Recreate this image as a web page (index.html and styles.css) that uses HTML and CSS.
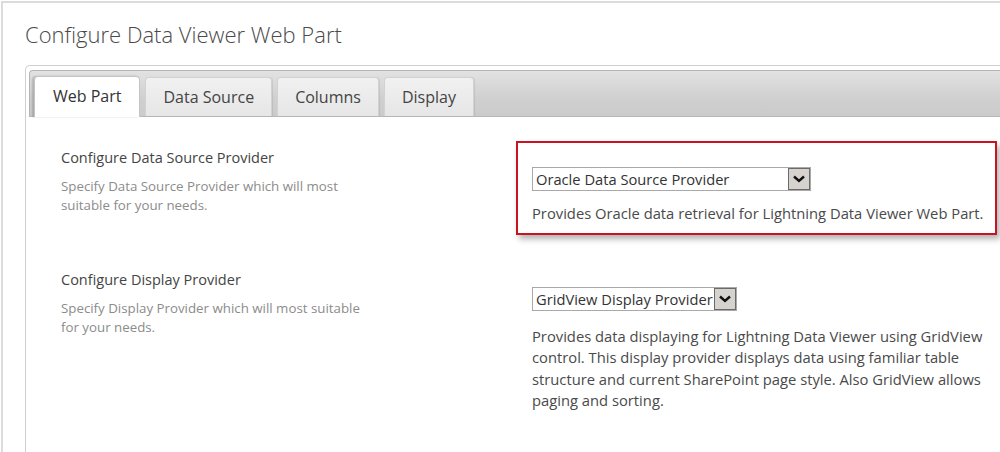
FILE: index.html
```html
<!DOCTYPE html>
<html>
<head>
<meta charset="utf-8">
<link rel="stylesheet" href="styles.css">
</head>
<body>
<div class="frame">
  <h1 class="title">Configure Data Viewer Web Part</h1>
  <div class="panel">
    <div class="strip">
      <div class="tab active">Web Part</div>
      <div class="tab">Data Source</div>
      <div class="tab">Columns</div>
      <div class="tab">Display</div>
    </div>
    <div class="body">
      <div class="row row1">
        <div class="label">
          <div class="label-title">Configure Data Source Provider</div>
          <div class="label-desc">Specify Data Source Provider which will most<br>suitable for your needs.</div>
        </div>
        <div class="field highlight">
          <div class="select sel1">
            <span class="sel-text">Oracle Data Source Provider</span>
            <span class="sel-btn"><svg width="14" height="10" viewBox="0 0 14 10"><path d="M2 2.5 L7 7 L12 2.5" fill="none" stroke="#111" stroke-width="2.4"/></svg></span>
          </div>
          <div class="field-desc">Provides Oracle data retrieval for Lightning Data Viewer Web Part.</div>
        </div>
      </div>
      <div class="row row2">
        <div class="label">
          <div class="label-title">Configure Display Provider</div>
          <div class="label-desc">Specify Display Provider which will most suitable<br>for your needs.</div>
        </div>
        <div class="field plain">
          <div class="select sel2">
            <span class="sel-text">GridView Display Provider</span>
            <span class="sel-btn"><svg width="14" height="10" viewBox="0 0 14 10"><path d="M2 2.5 L7 7 L12 2.5" fill="none" stroke="#111" stroke-width="2.4"/></svg></span>
          </div>
          <div class="field-desc multi">Provides data displaying for Lightning Data Viewer using GridView control. This display provider displays data using familiar table structure and current SharePoint page style. Also GridView allows paging and sorting.</div>
        </div>
      </div>
    </div>
  </div>
</div>
</body>
</html>
```
FILE: styles.css
```css
html, body {
  margin: 0;
  padding: 0;
  background: #fff;
  height: 100%;
  overflow: hidden;
}
body {
  font-family: "Open Sans", "Noto Sans", sans-serif;
  color: #444;
}
.frame {
  margin-top: 1px;
  margin-left: 1px;
  border-top: 2px solid #dcdcdc;
  border-left: 2px solid #dcdcdc;
  height: calc(100% - 1px);
  box-sizing: border-box;
  display: flex;
  flex-direction: column;
}
.title {
  margin: 0;
  padding: 17px 0 0 22px;
  font-weight: 300;
  font-size: 22px;
  line-height: 28px;
  color: #4a4a4a;
  height: 62px;
  box-sizing: border-box;
  flex: none;
}
.panel {
  margin-left: 22px;
  border: 1px solid #cfcfcf;
  border-right: none;
  border-bottom: none;
  border-radius: 5px 0 0 0;
  padding: 4px 0 0 3px;
  flex: 1;
  min-height: 0;
}
.strip {
  display: flex;
  align-items: flex-end;
  gap: 5px;
  height: 47px;
  box-sizing: border-box;
  padding-left: 4px;
  border-top: 1px solid #b4b4b4;
  border-left: 1px solid #b4b4b4;
  border-bottom: 1px solid #b8b8b8;
  border-radius: 4px 0 0 0;
  background: linear-gradient(#e2e2e2, #d0d0d0 60%, #cbcbcb);
}
.tab {
  height: 39px;
  box-sizing: border-box;
  padding: 0 17px;
  border: 1px solid #d2d2d2;
  border-bottom: none;
  border-radius: 4px 4px 0 0;
  background: linear-gradient(#f1f1f1, #e6e6e6);
  font-size: 16px;
  line-height: 39px;
  color: #444;
  box-shadow: 1px 0 1px rgba(0,0,0,0.08);
}
.tab.active {
  background: #fff;
  height: 41px;
  margin-bottom: -1px;
  border-color: #c4c4c4;
  box-shadow: -2px 0 2px rgba(0,0,0,0.18);
  color: #333;
  padding: 0 18px;
}
.body {
  padding-left: 32px;
}
.row {
  display: flex;
}
.label {
  width: 471px;
  flex: none;
}
.label-title {
  font-size: 14.5px;
  line-height: 20px;
  color: #444;
}
.label-desc {
  margin-top: 9px;
  font-size: 13.3px;
  line-height: 19px;
  color: #8c8c8c;
}
.row1 .label {
  padding-top: 31px;
}
.row2 .label {
  padding-top: 35px;
}
.field {
  flex: none;
}
.highlight {
  margin-top: 24px;
  margin-left: -16px;
  width: 481px;
  height: 94px;
  box-sizing: border-box;
  border: 2px solid #c8141e;
  padding: 24px 0 0 14px;
  box-shadow: 3px 4px 6px rgba(0,0,0,0.3);
}
.plain {
  padding-top: 52px;
}
.select {
  display: flex;
  align-items: stretch;
  height: 24px;
  box-sizing: border-box;
  border: 1px solid #a9a9a9;
  background: #fff;
}
.sel1 { width: 279px; }
.sel2 { width: 205px; }
.sel-text {
  flex: 1;
  padding-left: 3px;
  font-size: 14.7px;
  line-height: 22px;
  color: #333;
  white-space: nowrap;
  overflow: hidden;
}
.sel-btn {
  width: 20px;
  flex: none;
  border: 1px solid #6a6a6a;
  background: #d6d3ce;
  display: flex;
  align-items: center;
  justify-content: center;
}
.field-desc {
  margin-top: 12px;
  font-size: 14.75px;
  line-height: 21px;
  color: #4a4a4a;
  white-space: nowrap;
}
.field-desc.multi {
  white-space: normal;
  width: 462px;
  margin-top: 15px;
  line-height: 21.3px;
}
```
